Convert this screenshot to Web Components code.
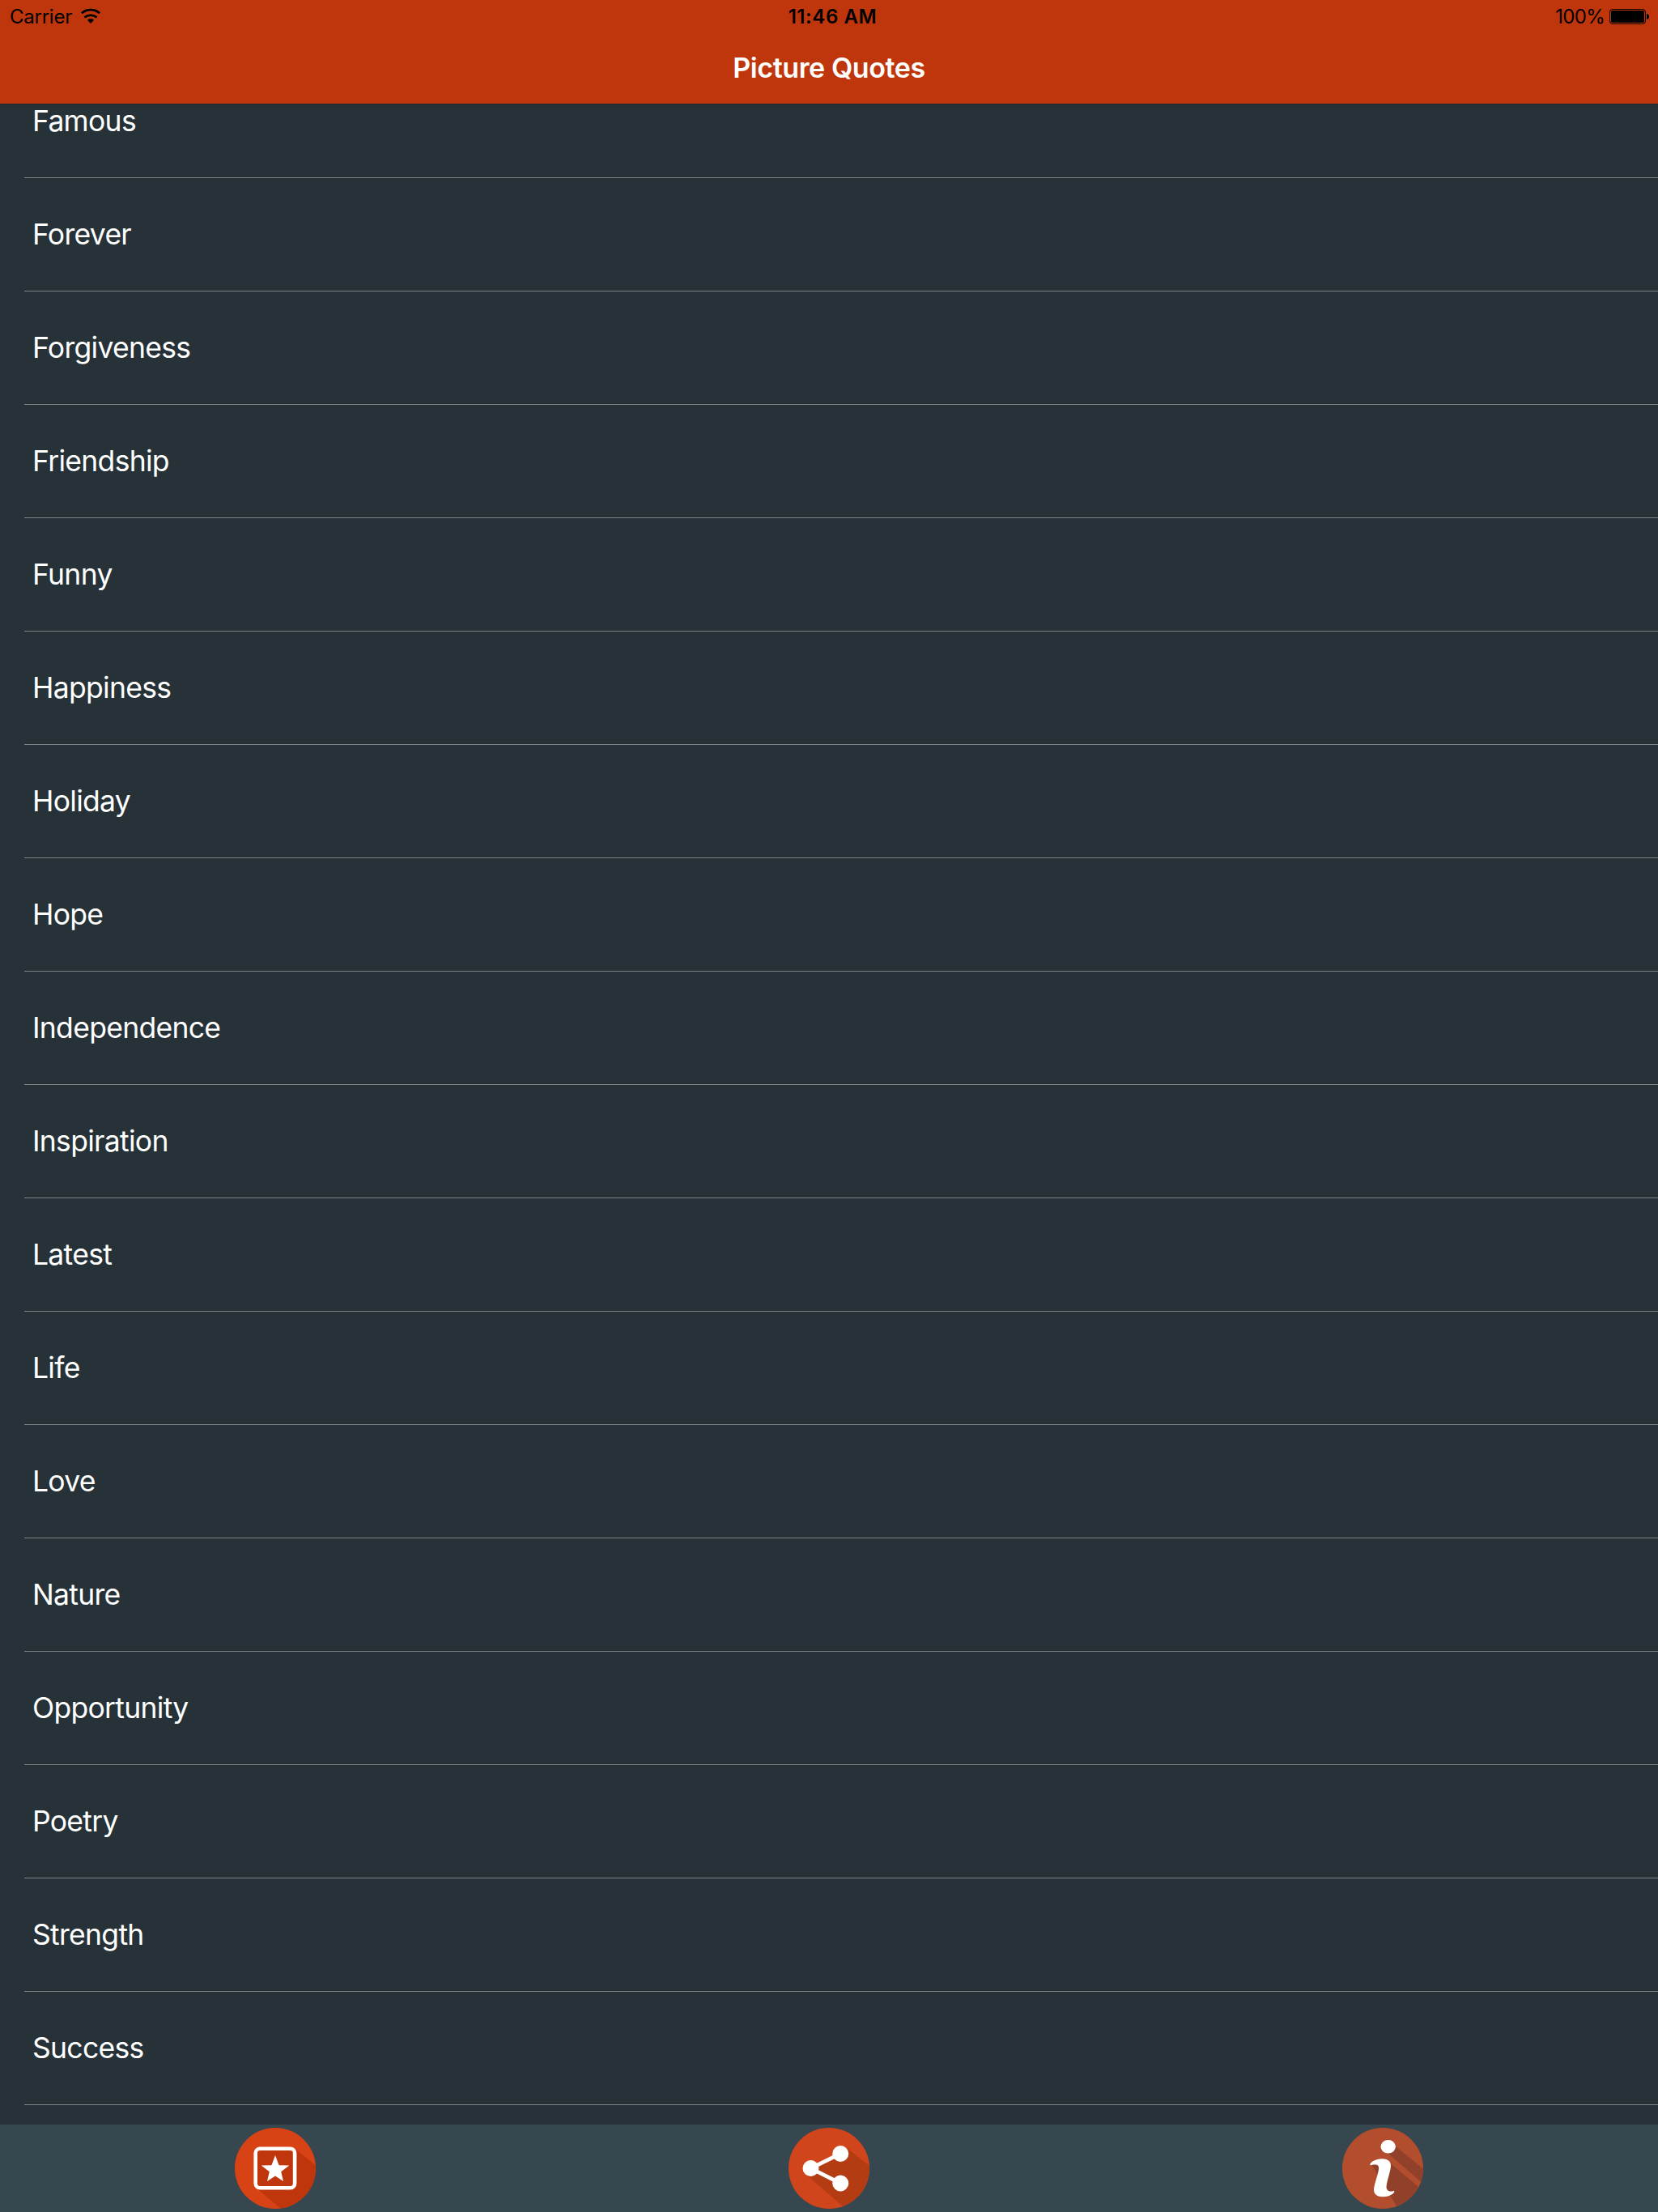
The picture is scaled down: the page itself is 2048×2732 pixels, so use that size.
<!DOCTYPE html>
<html lang="en">
<head>
<meta charset="utf-8">
<title>Picture Quotes</title>
<style>
  body { margin: 0; background: #263238; font-family: Inter, "Liberation Sans", sans-serif; }
</style>
</head>
<body>
<quotes-app></quotes-app>

<script>
const define = (name, html, setup) => {
  const template = document.createElement('template');
  template.innerHTML = html;
  customElements.define(name, class extends HTMLElement {
    constructor() {
      super();
      this.attachShadow({ mode: 'open' })
          .appendChild(template.content.cloneNode(true));
    }
    connectedCallback() {
      if (setup) setup(this, this.shadowRoot);
    }
  });
};

define('status-bar', `
  <style>
    :host {
      display: grid;
      grid-template-columns: 1fr auto 1fr;
      height: 40px;
      padding: 0 11px 0 12px;
      box-sizing: border-box;
      color: #000;
      font-size: 24px;
      line-height: 41px;
    }
    div { display: flex; align-items: flex-start; }
    .left { gap: 11.5px; letter-spacing: -0.25px; }
    .time { font-weight: 560; letter-spacing: 0.6px; padding-left: 8px; }
    .right { justify-content: flex-end; gap: 6px; letter-spacing: -0.7px; }
    svg { display: block; margin-top: 10px; }
  </style>
  <div class="left">
    <span>Carrier</span>
    <svg width="24" height="20" viewBox="0 0 24 20">
      <g fill="none" stroke="#000" stroke-width="2.7">
        <path d="M0.9 6.3A17 17 0 0 1 23.1 6.3"/>
        <path d="M4.4 11.6A11.5 11.5 0 0 1 19.6 11.6"/>
      </g>
      <path d="M12 19L7.9 14.8Q12 11.4 16.1 14.8Z"/>
    </svg>
  </div>
  <div class="time">11:46 AM</div>
  <div class="right">
    <span>100%</span>
    <svg width="49" height="20" viewBox="0 0 49 20">
      <rect x="0.5" y="1.5" width="44" height="18" rx="3.5" fill="none" stroke="#000"/>
      <rect x="2" y="3" width="41" height="15" rx="2"/>
      <path d="M46 7Q49 7.5 49 10.5T46 14Z"/>
    </svg>
  </div>
`);

define('nav-bar', `
  <style>
    :host {
      display: block;
      height: 128px;
      background: #bf360c;
      color: #fff;
    }
    h1 {
      margin: 0;
      height: 88px;
      line-height: 88px;
      font-size: 34px;
      font-weight: 570;
      text-align: center;
      letter-spacing: -0.4px;
    }
  </style>
  <status-bar></status-bar>
  <h1><slot></slot></h1>
`);

define('quote-row', `
  <style>
    :host {
      display: block;
      height: 140px;
      padding-left: 30px;
      box-sizing: border-box;
    }
    div {
      height: 100%;
      padding-left: 10px;
      box-sizing: border-box;
      border-bottom: 1px solid #7d8386;
      color: #fff;
      font-size: 35.5px;
      font-weight: 380;
      line-height: 139px;
      letter-spacing: -0.7px;
    }
  </style>
  <div><slot></slot></div>
`);

define('quote-list', `
  <style>
    /* scrolled: the first row sits partly under the nav bar */
    :host {
      display: block;
      overflow: hidden;
      box-sizing: border-box;
      border-top: 1px solid #20282c;
    }
    .rows { margin-top: -49px; }
  </style>
  <div class="rows"></div>
`, (host, root) => {
  const rows = root.querySelector('.rows');
  for (const name of host.getAttribute('items').split(',')) {
    const row = document.createElement('quote-row');
    row.textContent = name;
    rows.append(row);
  }
});

define('tab-button', `
  <style>
    :host { display: block; width: 100px; height: 100px; }
    ::slotted(svg) { display: block; width: 100px; height: 100px; border-radius: 50%; }
  </style>
  <slot></slot>
`);

define('tab-bar', `
  <style>
    :host {
      display: flex;
      justify-content: space-between;
      align-items: center;
      padding: 0 290px;
      background: #37474f;
    }
  </style>
  <tab-button>
    <svg viewBox="0 0 100 100">
      <rect width="100" height="100" fill="#d84315"/>
      <path d="M74 25.5L110 54.5V110H69L27 75Z" fill="#bf360c"/>
      <rect x="25.7" y="25.8" width="48.4" height="48.4" rx="5.5" fill="#bf360c" stroke="#fff" stroke-width="4.6"/>
      <path d="M50 34L54.6 46.2L67.3 46.4L57.2 54.2L60 66L50 59.6L40 66L42.8 54.2L32.7 46.4L45.4 46.2Z" fill="#fff"/>
    </svg>
  </tab-button>
  <tab-button>
    <svg viewBox="0 0 100 100">
      <rect width="100" height="100" fill="#d1451c"/>
      <path d="M72 25L110 55V110H82L21 57L36 45Z" fill="#b33c12"/>
      <path d="M64 32L27.5 50L64 68.5" fill="none" stroke="#fff" stroke-width="4.8"/>
      <g fill="#fff">
        <circle cx="64.2" cy="32" r="10"/>
        <circle cx="27.5" cy="50" r="10"/>
        <circle cx="64.2" cy="68.5" r="10"/>
      </g>
    </svg>
  </tab-button>
  <tab-button>
    <svg viewBox="0 0 100 100">
      <rect width="100" height="100" fill="#b24d2d"/>
      <path d="M64 21.3L110 59V77.5L51 27Z" fill="#91412a"/>
      <path d="M59 43.5L110 86.5V110H75L36 45Z" fill="#91412a"/>
      <ellipse cx="56.7" cy="23.3" rx="9.2" ry="8.3" fill="#fff"/>
      <path d="M34.3 46.3C34 42 42 38.3 48.5 38.3C58 38.3 61.5 43 59.5 51C58 58 55 67 54.6 72C54.3 76 56 78 59 78.5C61 78.8 63 78.3 64.3 77.8C64.8 82 57 85.3 50 85.3C42 85.3 38 81 39.2 74C40.5 67 44 58 45 51.5C45.6 47 44 45.5 40.5 45.4C38 45.4 36 45.8 34.3 46.3Z" fill="#fff"/>
    </svg>
  </tab-button>
`);

define('quotes-app', `
  <style>
    :host {
      display: grid;
      grid-template-rows: 128px minmax(0, 1fr) 108px;
      height: 2732px;
      background: #263238;
    }
  </style>
  <nav-bar>Picture Quotes</nav-bar>
  <quote-list items="Famous,Forever,Forgiveness,Friendship,Funny,Happiness,Holiday,Hope,Independence,Inspiration,Latest,Life,Love,Nature,Opportunity,Poetry,Strength,Success"></quote-list>
  <tab-bar></tab-bar>
`);
</script>
</body>
</html>
